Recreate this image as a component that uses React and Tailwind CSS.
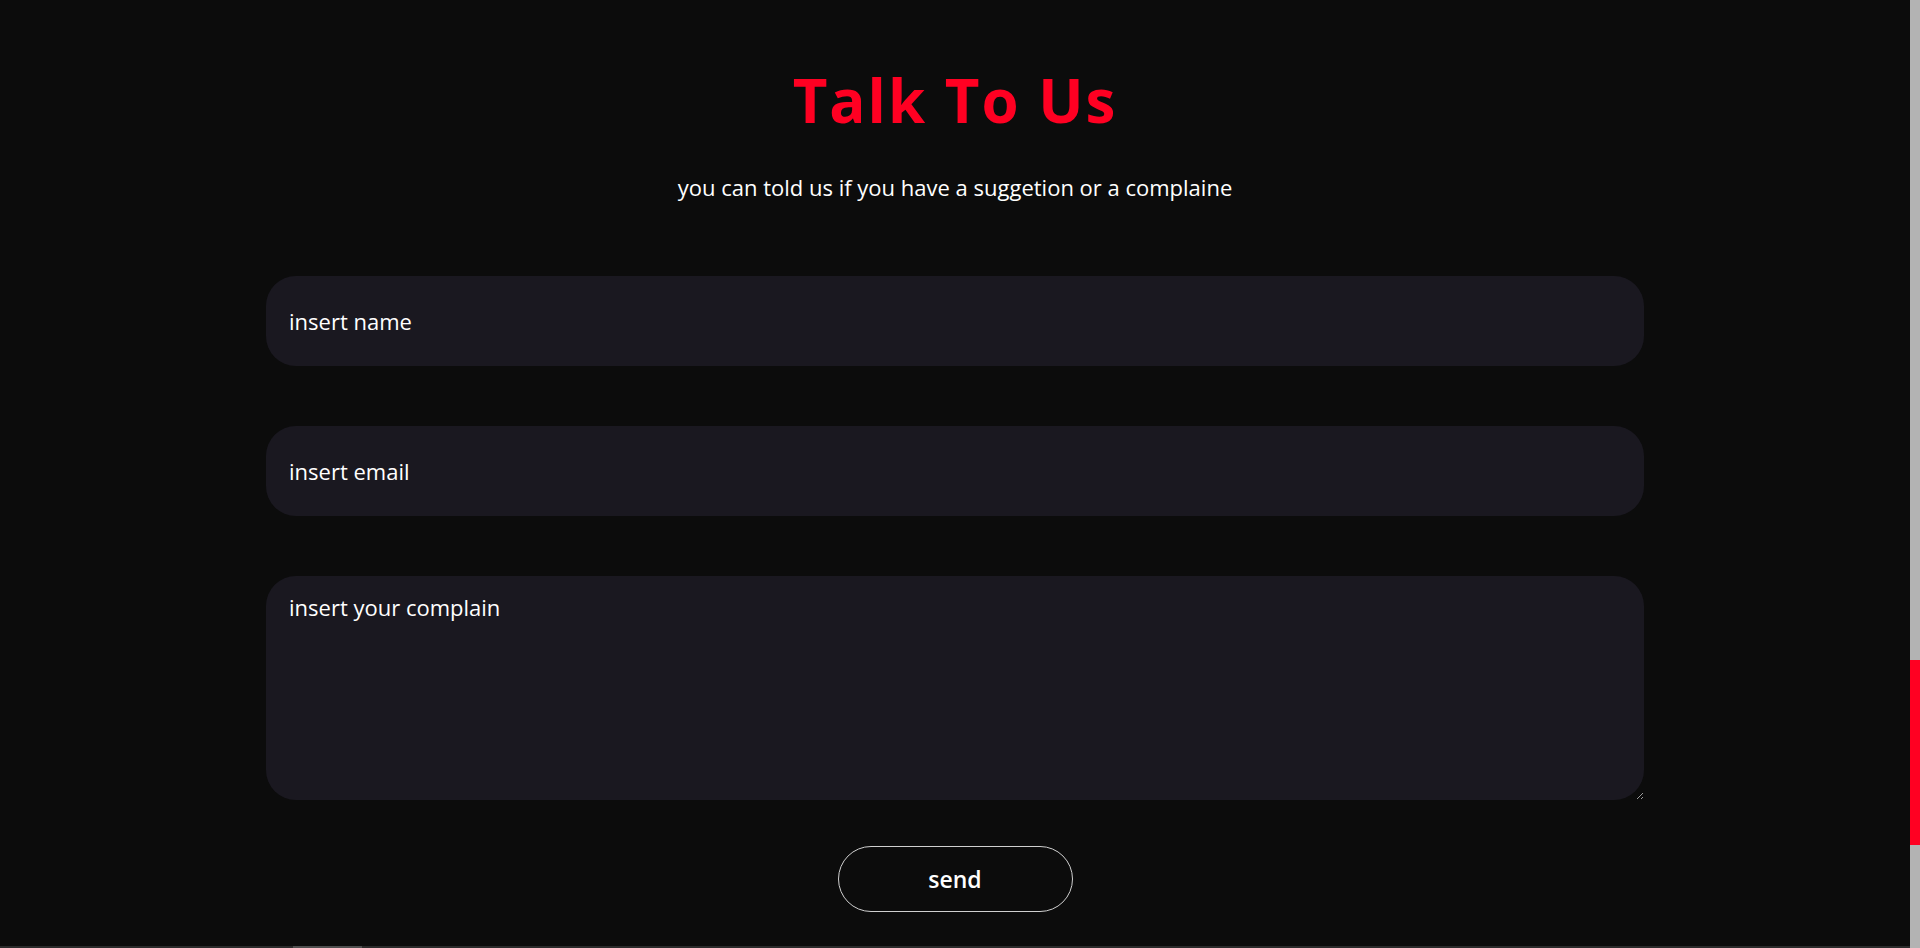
export default function App() {
  return (
    <div className="flex h-[948px] w-full overflow-hidden bg-[#0c0c0c] font-['Comic_Sans_MS','Open_Sans',sans-serif]">
      {/* MAIN */}
      <div className="flex flex-1 flex-col">
        <section className="flex flex-1 flex-col items-center pt-[62px]">
          <h1 className="text-[60px] font-bold leading-[76px] tracking-[2px] text-[#ff0022]">
            Talk To Us
          </h1>
          <p className="mt-[35px] text-[22px] leading-[28px] text-white">
            you can told us if you have a suggetion or a complaine
          </p>

          {/* FORM */}
          <form className="mt-[75px] flex w-[1378px] flex-col items-center gap-[60px]">
            <input
              type="text"
              placeholder="insert name"
              className="h-[90px] w-full rounded-[30px] bg-[#1a1820] px-[23px] text-[22px] text-white outline-none placeholder:text-white"
            />
            <input
              type="email"
              placeholder="insert email"
              className="h-[90px] w-full rounded-[30px] bg-[#1a1820] px-[23px] text-[22px] text-white outline-none placeholder:text-white"
            />
            <div className="flex w-full flex-col items-center gap-[46px]">
              <textarea
                placeholder="insert your complain"
                className="h-[224px] w-full rounded-[30px] bg-[#1a1820] px-[23px] pt-[15px] text-[22px] text-white outline-none [color-scheme:dark] placeholder:text-white"
              />
              <button
                type="button"
                className="h-[66px] w-[235px] rounded-full border border-[#d0d0d0] text-[23px] font-semibold text-white"
              >
                send
              </button>
            </div>
          </form>
        </section>

        {/* horizontal scrollbar peek */}
        <div className="flex h-[2px] w-full bg-[#2b2b2b]">
          <div className="ml-[293px] w-[69px] bg-[#4f4f4f]" />
        </div>
      </div>

      {/* SCROLLBAR */}
      <div className="flex w-[10px] flex-col bg-[#b3b3b3]">
        <div className="mt-[660px] h-[185px] bg-[#ff0022]" />
      </div>
    </div>
  );
}
